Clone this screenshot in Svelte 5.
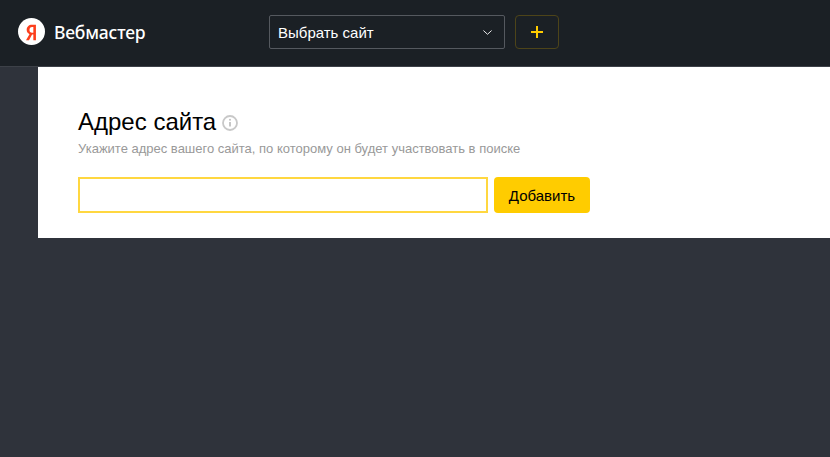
<script>
  let url = $state('');
</script>

<div class="page">
  <header class="top">
    <div class="brand">
      <svg class="logo" width="27" height="27" viewBox="0 0 28 28">
        <circle cx="14" cy="14" r="14" fill="#fff" />
        <path d="M15.900 23V17.200h-1.300l-3.200 5.800H8.300l3.600-6.200c-1.800-.8-2.900-2.400-2.900-4.500 0-3.200 2.200-5.300 5.500-5.300h4.100v16h-2.700zm0-13.600h-1.300c-1.700 0-2.700 1.100-2.700 3 0 1.800 1 2.800 2.700 2.800h1.300V9.400z" fill="#fc3f1d" />
      </svg>
      <span class="name">Вебмастер</span>
    </div>
    <button class="site-select">
      <span>Выбрать сайт</span>
      <svg width="9" height="5" viewBox="0 0 9 5"><path d="M.4.500 4.500 4.300 8.600.500" fill="none" stroke="#e8e8e8" stroke-width="1" /></svg>
    </button>
    <button class="add-site" aria-label="Добавить сайт">
      <svg width="12" height="12" viewBox="0 0 12 12"><path d="M6 0v12M0 6h12" stroke="#ffcc00" stroke-width="2" /></svg>
    </button>
  </header>

  <main class="card">
    <div class="title-row">
      <h1>Адрес сайта</h1>
      <svg class="info" width="16" height="16" viewBox="0 0 16 16">
        <circle cx="8" cy="8" r="7" fill="none" stroke="#c8c8c8" stroke-width="1.800" />
        <path d="M8 7v4.500" stroke="#c0c0c0" stroke-width="1.800" />
        <circle cx="8" cy="4.800" r="1" fill="#c0c0c0" />
      </svg>
    </div>
    <p class="hint">Укажите адрес вашего сайта, по которому он будет участвовать в поиске</p>
    <form class="add-form" onsubmit={(e) => e.preventDefault()}>
      <input class="url" type="text" bind:value={url} />
      <button class="submit" type="submit">Добавить</button>
    </form>
  </main>
</div>

<style>
  :global(body) {
    margin: 0;
    background: #2f333b;
    font-family: 'Liberation Sans', Arial, sans-serif;
  }

  .page {
    height: 457px;
    overflow: hidden;
    background: #2f333b;
  }

  .top {
    height: 67px;
    box-sizing: border-box;
    padding: 15px 0 0 18px;
    display: flex;
    align-items: flex-start;
    background: #1b2025;
    border-bottom: 1px solid #3d4148;
  }

  .brand {
    width: 251px;
    height: 34px;
    display: flex;
    align-items: center;
    gap: 9px;
  }

  .logo {
    flex: none;
    margin-top: -1px;
  }

  .name {
    font-family: 'Noto Sans', sans-serif;
    font-size: 17.500px;
    font-weight: 500;
    color: #fff;
    letter-spacing: -0.2px;
  }

  button {
    font-family: inherit;
    cursor: pointer;
  }

  .site-select {
    width: 236px;
    height: 34px;
    box-sizing: border-box;
    padding: 0 12px 0 8px;
    display: flex;
    align-items: center;
    justify-content: space-between;
    background: transparent;
    border: 1px solid #55595f;
    border-radius: 2px;
    color: #fff;
    font-size: 15px;
  }

  .add-site {
    width: 44px;
    height: 34px;
    margin-left: 10px;
    padding: 0;
    display: flex;
    align-items: center;
    justify-content: center;
    background: transparent;
    border: 1px solid #4d4419;
    border-radius: 4px;
  }

  .card {
    height: 171px;
    margin-left: 38px;
    box-sizing: border-box;
    padding: 41px 0 0 40px;
    background: #fff;
  }

  .title-row {
    display: flex;
    align-items: center;
    gap: 6px;
    height: 28px;
  }

  h1 {
    margin: 0;
    font-size: 24px;
    font-weight: 400;
    color: #000;
  }

  .info {
    margin-top: 1px;
  }

  .hint {
    margin: 5px 0 0;
    font-size: 13px;
    line-height: 16px;
    color: #999;
  }

  .add-form {
    display: flex;
    gap: 6px;
    margin-top: 20px;
  }

  .url {
    width: 410px;
    height: 36px;
    box-sizing: border-box;
    border: 2px solid #ffd740;
    outline: none;
    background: #fff;
  }

  .submit {
    width: 96px;
    height: 36px;
    padding: 0;
    border: none;
    border-radius: 4px;
    background: #ffcc00;
    color: #000;
    font-size: 15px;
  }
</style>
